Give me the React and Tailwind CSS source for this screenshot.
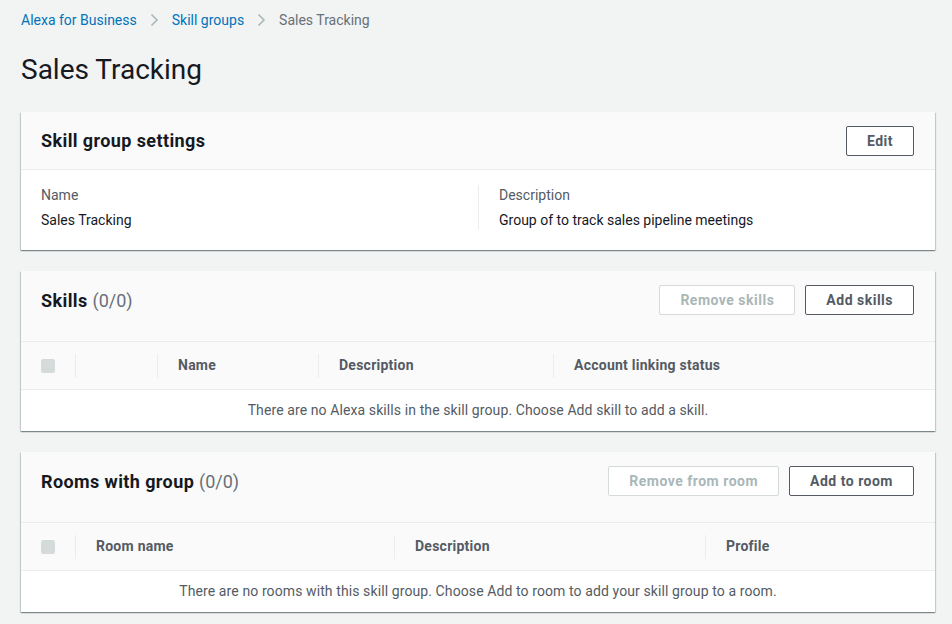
import React from 'react';

const Chevron = () => (
  <svg width="9" height="14" viewBox="0 0 9 14" className="mx-[13px] shrink-0">
    <path d="M1.5 1.5 L7 7 L1.5 12.5" fill="none" stroke="#aab7b8" strokeWidth="1.6" />
  </svg>
);

const Button = ({ children, disabled }) => (
  <button
    className={`h-[30px] px-5 rounded-[2px] border text-[14px] font-bold leading-none tracking-[0.5px] bg-white ${
      disabled ? 'border-[#d5dbdb] text-[#aab7b8]' : 'border-[#545b64] text-[#545b64]'
    }`}
  >
    {children}
  </button>
);

const Card = ({ children }) => (
  <div className="bg-white shadow-[0_1px_1px_0_rgba(0,28,36,0.3),1px_1px_1px_0_rgba(0,28,36,0.15),-1px_1px_1px_0_rgba(0,28,36,0.15)]">
    {children}
  </div>
);

const Divider = () => <span className="w-px h-6 bg-[#eaeded] shrink-0" />;

const Checkbox = () => <span className="w-[14px] h-[14px] rounded-[2px] bg-[#d5dbdb]" />;

const TableCard = ({ title, count, actions, columns, emptyText }) => (
  <Card>
    <div className="bg-[#fafafa] flex items-start justify-between pl-5 pr-[21px] pt-[14px] pb-[24px] border-b border-[#eaeded]">
      <h2 className="text-[18px] leading-[32px] font-bold text-[#16191f] tracking-[0.4px]">
        {title} <span className="font-normal text-[#687078] tracking-normal">{count}</span>
      </h2>
      <div className="flex gap-[10px]">{actions}</div>
    </div>
    <div className="bg-[#fafafa] h-[48px] flex items-center border-b border-[#eaeded] text-[14px] font-bold text-[#545b64] tracking-[0.25px]">
      <div className="w-[54px] pl-5 flex items-center">
        <Checkbox />
      </div>
      {columns.map((c, i) => (
        <div key={i} className="flex items-center" style={{ width: c.width }}>
          <Divider />
          <span className="pl-5">{c.label}</span>
        </div>
      ))}
    </div>
    <div className="h-[41px] flex items-center justify-center text-[14px] text-[#545b64] tracking-[0.1px]">{emptyText}</div>
  </Card>
);

export default function App() {
  return (
    <div className="min-h-screen bg-[#f2f3f3] pl-[21px] pr-[17px] pt-[10px] pb-6 font-['Roboto','Liberation_Sans',sans-serif]">
      <nav className="flex items-center h-5 text-[14px] leading-5">
        <a className="text-[#0073bb]">Alexa for Business</a>
        <Chevron />
        <a className="text-[#0073bb]">Skill groups</a>
        <Chevron />
        <span className="text-[#687078]">Sales Tracking</span>
      </nav>

      <h1 className="mt-[22px] mb-[24px] text-[28px] leading-9 text-[#16191f]">Sales Tracking</h1>

      <div className="flex flex-col gap-[21px]">
        <Card>
          <div className="bg-[#fafafa] flex items-center justify-between pl-5 pr-[21px] h-[58px] border-b border-[#eaeded]">
            <h2 className="text-[18px] font-bold text-[#16191f] tracking-[0.4px]">Skill group settings</h2>
            <Button>Edit</Button>
          </div>
          <div className="grid grid-cols-2 px-5 pt-[15px] pb-5 text-[14px] leading-5">
            <div>
              <div className="text-[#545b64] mb-[5px]">Name</div>
              <div className="text-[#16191f]">Sales Tracking</div>
            </div>
            <div className="border-l border-[#eaeded] pl-5">
              <div className="text-[#545b64] mb-[5px]">Description</div>
              <div className="text-[#16191f]">Group of to track sales pipeline meetings</div>
            </div>
          </div>
        </Card>

        <TableCard
          title="Skills"
          count="(0/0)"
          actions={[<Button key="r" disabled>Remove skills</Button>, <Button key="a">Add skills</Button>]}
          columns={[
            { label: '', width: 82 },
            { label: 'Name', width: 161 },
            { label: 'Description', width: 235 },
            { label: 'Account linking status', width: 382 },
          ]}
          emptyText="There are no Alexa skills in the skill group. Choose Add skill to add a skill."
        />

        <TableCard
          title="Rooms with group"
          count="(0/0)"
          actions={[<Button key="r" disabled>Remove from room</Button>, <Button key="a">Add to room</Button>]}
          columns={[
            { label: 'Room name', width: 319 },
            { label: 'Description', width: 311 },
            { label: 'Profile', width: 230 },
          ]}
          emptyText="There are no rooms with this skill group. Choose Add to room to add your skill group to a room."
        />
      </div>
    </div>
  );
}
